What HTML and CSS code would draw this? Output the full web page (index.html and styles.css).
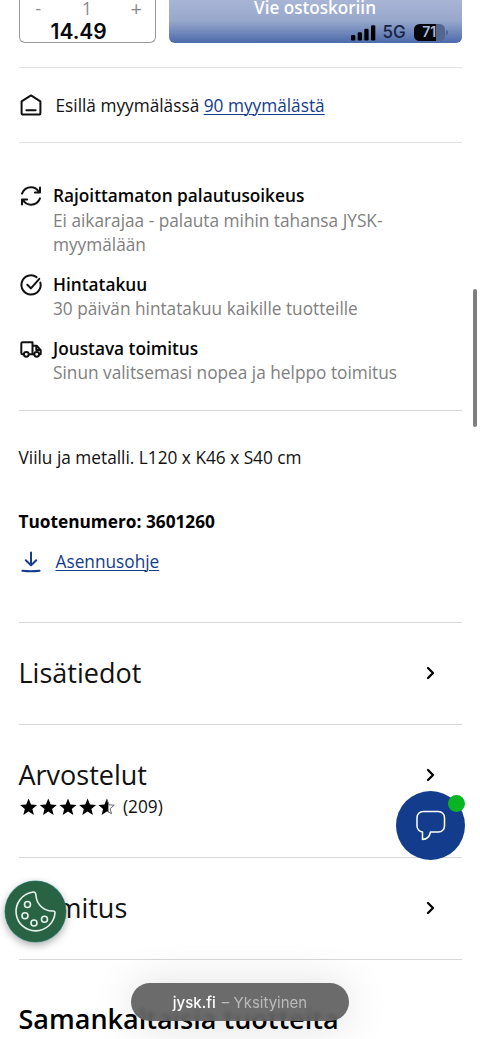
FILE: index.html
```html
<!DOCTYPE html>
<html lang="fi">
<head>
<meta charset="utf-8">
<title>JYSK</title>
<link rel="stylesheet" href="styles.css">
</head>
<body>
<main class="page">
  <div class="buy">
    <div class="qty"><span class="minus">-</span><span class="count">1</span><span class="plus">+</span></div>
    <div class="cart"><span>Vie ostoskoriin</span></div>
  </div>
  <div class="status">
    <span class="clock">14.49</span>
    <svg class="signal" width="25" height="16" viewBox="0 0 25 16"><rect x="0" y="10" width="4.3" height="5.5" rx="1.3"/><rect x="6.7" y="7.2" width="4.3" height="8.3" rx="1.3"/><rect x="13.3" y="3.8" width="4.3" height="11.7" rx="1.3"/><rect x="20" y="0.3" width="4.3" height="15.2" rx="1.3"/></svg>
    <span class="net">5G</span>
    <span class="battery"><b>71</b></span><i class="cap"></i>
  </div>

  <section class="store">
    <svg class="icon" width="24" height="24" viewBox="0 0 24 24"><path d="M2.6 8.3 12 2.400l9.400 5.900v11.600a1.700 1.700 0 0 1-1.700 1.700H4.300a1.700 1.700 0 0 1-1.700-1.700zM7.400 17.200h9.200"/></svg>
    <p>Esillä myymälässä <a>90 myymälästä</a></p>
  </section>

  <section class="benefits">
    <div class="benefit">
      <svg class="icon" width="24" height="24" viewBox="0 0 24 24"><path d="M3 9.600C4.500 5.800 8 3.300 12 3.300c3.300 0 6.200 1.700 8.200 4.700M21 3.400v5.100h-5.100M21 14.400c-1.500 3.800-5 6.300-9 6.300-3.300 0-6.200-1.700-8.200-4.700M3 20.600v-5.100h5.100"/></svg>
      <div><h3>Rajoittamaton palautusoikeus</h3><p>Ei aikarajaa - palauta mihin tahansa JYSK-<br>myymälään</p></div>
    </div>
    <div class="benefit">
      <svg class="icon" width="24" height="24" viewBox="0 0 24 24"><path d="M21.300 9.400A9.600 9.600 0 1 1 17.600 4.100M8.300 11.800l3.600 3.600 8.400-9.600"/></svg>
      <div><h3>Hintatakuu</h3><p>30 päivän hintatakuu kaikille tuotteille</p></div>
    </div>
    <div class="benefit">
      <svg class="icon" width="24" height="24" viewBox="0 0 24 24"><path d="M4.600 17.300H3.600A1.300 1.300 0 0 1 2.300 16V6.600a1.300 1.300 0 0 1 1.300-1.300h9.900v12H10M13.500 8.800h4.200l4 4.300v4.200h-1.200M15 17.300h-1.500M17.300 8.800v4.300h4.400"/><circle cx="7.300" cy="17.300" r="2.400"/><circle cx="17.700" cy="17.300" r="2.400"/></svg>
      <div><h3>Joustava toimitus</h3><p>Sinun valitsemasi nopea ja helppo toimitus</p></div>
    </div>
  </section>

  <section class="details">
    <p>Viilu ja metalli. L120 x K46 x S40 cm</p>
    <p class="sku">Tuotenumero: 3601260</p>
    <div class="manual">
      <svg class="icon blue" width="24" height="24" viewBox="0 0 24 24"><path d="M12 2.500v12.500M6.800 10.200l5.200 5.200 5.200-5.200M3.400 20.800q8.600 1 17.200 0"/></svg>
      <a>Asennusohje</a>
    </div>
  </section>

  <section class="row"><h2>Lisätiedot</h2><svg class="chev" width="14" height="16" viewBox="0 0 14 16"><path d="M4 3l5 5-5 5"/></svg></section>
  <section class="row reviews">
    <div class="line"><h2>Arvostelut</h2><svg class="chev" width="14" height="16" viewBox="0 0 14 16"><path d="M4 3l5 5-5 5"/></svg></div>
    <div class="rating">
      <svg width="98" height="18" viewBox="0 0 98 18">
        <defs><path id="star" d="M8.300 0 10.700 5.800 16.800 6.300 12.100 10.300 13.600 16.300 8.300 13 3 16.300 4.500 10.300-.2 6.300 5.900 5.800z"/><clipPath id="half"><rect x="-1" y="-1" width="10.800" height="20"/></clipPath></defs>
        <use href="#star" x="1.300" y=".6"/><use href="#star" x="21" y=".6"/><use href="#star" x="40.700" y=".6"/><use href="#star" x="60.300" y=".6"/>
        <g transform="translate(79.600 .6)"><use href="#star" clip-path="url(#half)"/><path d="M8.300 1 10.400 6.200 15.600 6.600 11.600 10.100 12.900 15.200 8.300 12.400" fill="none" stroke="#666" stroke-width="1"/></g>
      </svg>
      <span>(209)</span>
    </div>
  </section>
  <section class="row delivery"><h2>Toimitus</h2><svg class="chev" width="14" height="16" viewBox="0 0 14 16"><path d="M4 3l5 5-5 5"/></svg></section>
  <section class="similar"><h2>Samankaltaisia tuotteita</h2></section>
</main>

<div class="scrollbar"></div>
<div class="chat">
  <svg width="69" height="69" viewBox="0 0 69 69"><path d="M27 20.500h15.500a6 6 0 0 1 6 6v8.500a6 6 0 0 1-6 6H34.500c-.8 4-3.500 7.200-8 7.500V41a6 6 0 0 1-5.500-6v-8.500a6 6 0 0 1 6-6z"/></svg>
  <i></i>
</div>
<div class="cookie">
  <svg width="61" height="61" viewBox="0 0 61 61"><path d="M30.500 12.200c-.5-1.300-1.600-1.500-3.500-1A19.500 19.500 0 1 0 50 31.700c.1-1.200-.7-1.900-2.500-1.700-8.500.2-15.800-6.500-16.500-15.300z"/><circle cx="22.500" cy="23.500" r="3"/><circle cx="20" cy="34.700" r="3"/><circle cx="29" cy="42" r="3"/><circle cx="39.500" cy="38.300" r="3"/></svg>
</div>
<div class="address"><b>jysk.fi</b><span>– Yksityinen</span></div>
</body>
</html>
```
FILE: styles.css
```css
* { box-sizing: border-box; }
html, body { margin: 0; height: 1039px; overflow: hidden; background: #fff; }
body { position: relative; font: 17.25px/24.5px "Open Sans", "Noto Sans", sans-serif; color: #111; }
h2, h3, p { margin: 0; }
a { color: #143c8c; text-decoration: underline; text-decoration-thickness: 1px; text-underline-offset: 2px; }
.page { padding: 0 18.5px; }
.buy { display: flex; gap: 12.5px; height: 43px; }
.qty { width: 137.5px; border: 1px solid #999; border-top: 0; border-radius: 0 0 6px 6px; display: flex; justify-content: space-between; padding: 0 13px 0 16px; color: #888; line-height: 17px; }
.count { padding-left: 2px; }
.plus { font-size: 20px; }
.cart { flex: 1; border-radius: 0 0 6px 6px; background: linear-gradient(#a8b5d5, #97a7cc 50%, #4f6dac); border-bottom: 1px solid #4f6baa; color: #fff; text-align: center; font-size: 17.1px; font-weight: 600; line-height: 15px; }
.status { position: absolute; left: 50.5px; top: 21.5px; width: 398px; height: 22px; display: flex; align-items: center; font-family: Inter, sans-serif; color: #080a10; }
.clock { font-size: 21px; font-weight: 600; width: 300px; }
.signal { flex: none; }
.net { font-size: 17px; font-weight: 500; margin-left: 7px; width: 31.5px; color: #17223f; }
.battery { width: 30.5px; height: 17px; flex: none; border-radius: 5.5px; background: linear-gradient(90deg, #05070c 72%, #53668f 72%); display: flex; align-items: center; justify-content: center; }
.battery b { font-size: 14px; font-weight: 600; color: #a9b9dc; }
.cap { width: 2px; height: 5px; border-radius: 0 2px 2px 0; background: #53668f; margin-left: 1px; flex: none; }
.icon { flex: none; fill: none; stroke: #111; stroke-width: 2; stroke-linecap: round; stroke-linejoin: round; }
.icon.blue { stroke: #143c8c; }
.store { margin-top: 24px; height: 76px; border-top: 1px solid #e2e2e2; border-bottom: 1px solid #e2e2e2; display: flex; align-items: center; gap: 13px; }
.store p { padding-top: 1.5px; }
.benefits { height: 267.5px; padding-top: 41px; border-bottom: 1px solid #d8d8d8; display: flex; flex-direction: column; gap: 15px; }
.benefit { display: flex; gap: 10.5px; }
.benefit h3 { font-size: 17.25px; line-height: 24.5px; font-weight: 600; color: #050505; }
.benefit p { color: #808080; }
.details { height: 212px; padding-top: 35px; border-bottom: 1px solid #d8d8d8; }
.sku { font-weight: 700; margin-top: 39.5px; color: #000; }
.manual { display: flex; align-items: center; gap: 13px; margin-top: 15.5px; }
.row { height: 102px; border-bottom: 1px solid #d8d8d8; display: flex; align-items: center; justify-content: space-between; padding-right: 24px; }
.row h2 { font-size: 27px; line-height: 36px; font-weight: 400; }
.chev { fill: none; stroke: #050505; stroke-width: 2.3; stroke-linecap: round; stroke-linejoin: round; }
.reviews { height: 133px; display: block; padding-top: 32.5px; }
.line { display: flex; align-items: center; justify-content: space-between; }
.rating { display: flex; align-items: center; gap: 6.5px; height: 28px; }
.similar { padding-top: 41px; }
.similar h2 { font-size: 27px; line-height: 36px; font-weight: 600; color: #000; }
.scrollbar { position: absolute; left: 472.5px; top: 289px; width: 4px; height: 138px; border-radius: 2px; background: #7f7f7f; }
.chat { position: absolute; left: 396px; top: 791px; width: 69px; height: 69px; border-radius: 50%; background: #143c8c; }
.chat svg { fill: none; stroke: #fff; stroke-width: 1.5; stroke-linejoin: round; }
.chat i { position: absolute; left: 52px; top: 4px; width: 17px; height: 17px; border-radius: 50%; background: #0bb422; }
.cookie { position: absolute; left: 5px; top: 881px; width: 61px; height: 61px; border-radius: 50%; background: #286343; box-shadow: 0 0 0 .5px #4d9d9d, 0 3px 9px rgba(0,0,0,.35); }
.cookie svg { fill: none; stroke: #e9f3ed; stroke-width: 1.6; }
.address { position: absolute; left: 131px; top: 983px; width: 218px; height: 38px; border-radius: 19px; background: rgba(96,96,96,.93); backdrop-filter: blur(2px); box-shadow: 0 3px 45px rgba(0,0,0,.14); display: flex; align-items: center; justify-content: center; gap: 6px; font: 15px Inter, sans-serif; color: #bbb; }
.address b { font-weight: 500; color: #fff; }
```
